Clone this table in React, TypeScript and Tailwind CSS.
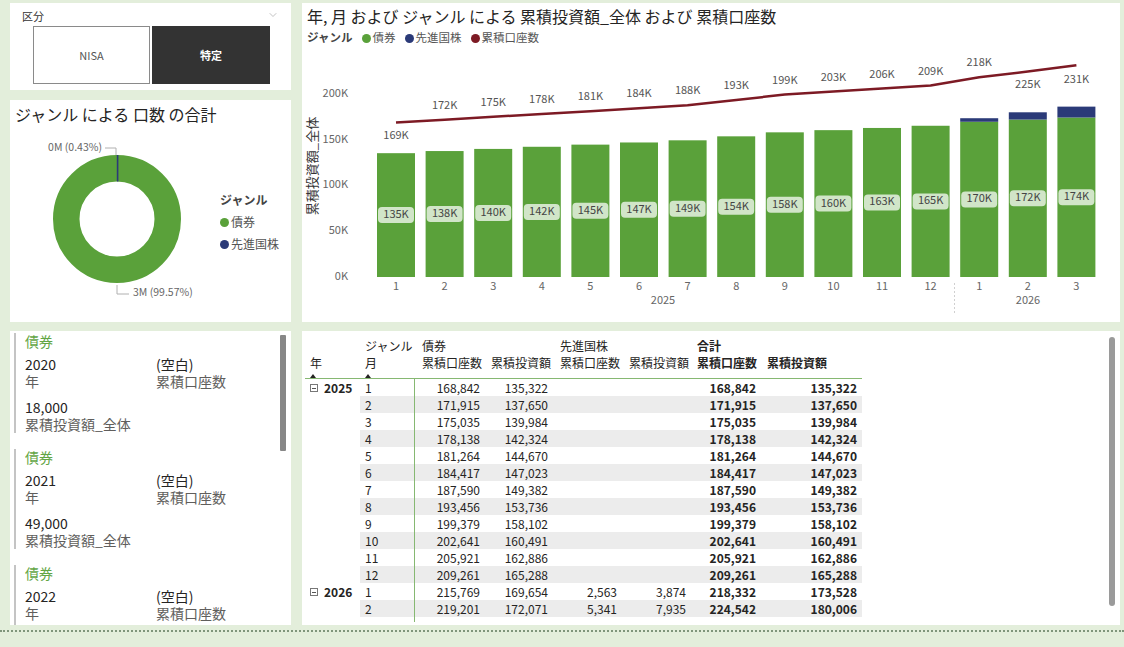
import { ChevronDown } from "lucide-react"

const green = [135.322, 137.65, 139.984, 142.324, 144.67, 147.023, 149.382, 153.736, 158.102, 160.491, 162.886, 165.288, 169.654, 172.071, 174.3]
const navy = [0, 0, 0, 0, 0, 0, 0, 0, 0, 0, 0, 0, 3.874, 7.935, 11.9]
const accounts = [168.842, 171.915, 175.035, 178.138, 181.264, 184.417, 187.59, 193.456, 199.379, 202.641, 205.921, 209.261, 218.332, 224.542, 231.4]
const months = [1, 2, 3, 4, 5, 6, 7, 8, 9, 10, 11, 12, 1, 2, 3]

const rows = [
  { y: "2025", m: "1", a: "168,842", b: "135,322", c: "", d: "", e: "168,842", f: "135,322" },
  { y: "", m: "2", a: "171,915", b: "137,650", c: "", d: "", e: "171,915", f: "137,650" },
  { y: "", m: "3", a: "175,035", b: "139,984", c: "", d: "", e: "175,035", f: "139,984" },
  { y: "", m: "4", a: "178,138", b: "142,324", c: "", d: "", e: "178,138", f: "142,324" },
  { y: "", m: "5", a: "181,264", b: "144,670", c: "", d: "", e: "181,264", f: "144,670" },
  { y: "", m: "6", a: "184,417", b: "147,023", c: "", d: "", e: "184,417", f: "147,023" },
  { y: "", m: "7", a: "187,590", b: "149,382", c: "", d: "", e: "187,590", f: "149,382" },
  { y: "", m: "8", a: "193,456", b: "153,736", c: "", d: "", e: "193,456", f: "153,736" },
  { y: "", m: "9", a: "199,379", b: "158,102", c: "", d: "", e: "199,379", f: "158,102" },
  { y: "", m: "10", a: "202,641", b: "160,491", c: "", d: "", e: "202,641", f: "160,491" },
  { y: "", m: "11", a: "205,921", b: "162,886", c: "", d: "", e: "205,921", f: "162,886" },
  { y: "", m: "12", a: "209,261", b: "165,288", c: "", d: "", e: "209,261", f: "165,288" },
  { y: "2026", m: "1", a: "215,769", b: "169,654", c: "2,563", d: "3,874", e: "218,332", f: "173,528" },
  { y: "", m: "2", a: "219,201", b: "172,071", c: "5,341", d: "7,935", e: "224,542", f: "180,006" },
  { y: "", m: "3", a: "222,684", b: "174,321", c: "8,672", d: "11,842", e: "231,356", f: "186,163" },
]

const cards = [
  { year: "2020", amount: "18,000" },
  { year: "2021", amount: "49,000" },
  { year: "2022", amount: "81,000" },
]

const cols = "grid grid-cols-[55px_55px_69px_68px_69px_69px_70px_102px]"

function Slicer() {
  return (
    <div className="h-[87px] bg-white relative">
      <div className="pl-[12px] pt-[6px] text-[11px] leading-[14px] text-[#333]">区分</div>
      <ChevronDown className="absolute right-[12px] top-[6px] text-[#999]" size={12} strokeWidth={1.2} />
      <div className="flex gap-[2px] pl-[23px] mt-[3px]">
        <div className="w-[117px] h-[58px] border border-[#8a8a8a] flex items-center justify-center text-[11px] text-[#555]">NISA</div>
        <div className="w-[118px] h-[58px] bg-[#333333] flex items-center justify-center text-[11px] font-bold text-white">特定</div>
      </div>
    </div>
  )
}

function Donut() {
  const cx = 107
  const cy = 91
  return (
    <div className="h-[222px] bg-white">
      <div className="h-[28px] flex items-center pl-[5px] text-[16px] text-[#252423]">ジャンル による 口数 の合計</div>
      <div className="flex">
        <svg width="205" height="194">
          <circle cx={cx} cy={cy} r="50.75" fill="none" stroke="#5aa13a" strokeWidth="26.5" />
          <line x1={cx + 0.6} y1={cy - 37.5} x2={cx + 0.6} y2={cy - 64} stroke="#2b3a78" strokeWidth="1.6" />
          <polyline points="95,20 106,20 106,27" fill="none" stroke="#b0b0b0" strokeWidth="1" />
          <text x="92" y="20" textAnchor="end" dominantBaseline="middle" fontSize="10.5" fill="#666">0M (0.43%)</text>
          <polyline points="107,157 107,166 119,166" fill="none" stroke="#b0b0b0" strokeWidth="1" />
          <text x="123" y="165" dominantBaseline="middle" fontSize="10.5" fill="#666">3M (99.57%)</text>
        </svg>
        <div className="pt-[61px] pl-[5px] text-[12px] leading-[22px] text-[#555]">
          <div className="font-bold text-[#444]">ジャンル</div>
          <div className="flex items-center gap-[2px]">
            <span className="w-[9px] h-[9px] rounded-full bg-[#5aa13a]" />債券
          </div>
          <div className="flex items-center gap-[2px]">
            <span className="w-[9px] h-[9px] rounded-full bg-[#2b3a78]" />先進国株
          </div>
        </div>
      </div>
    </div>
  )
}

function ComboChart() {
  const base = 230
  const k = 0.915
  const x = (i: number) => 94 + i * 48.6
  const y = (v: number) => base - v * k
  const linePts = accounts.map((v, i) => `${x(i)},${y(v)}`).join(" ")
  const offs = (i: number) => (i === 0 ? 14 : i === 13 ? 13 : i === 14 ? 15 : -14)
  return (
    <div className="w-[818px] h-[319px] bg-white">
      <div className="h-[26px] flex items-center pl-[5px] text-[16px] text-[#252423]">
        年, 月 および ジャンル による 累積投資額_全体 および 累積口座数
      </div>
      <div className="h-[18px] flex items-center gap-[10px] pl-[5px] text-[11.5px] text-[#555]">
        <span className="font-bold text-[#444]">ジャンル</span>
        <span className="flex items-center gap-[1px]"><span className="w-[9px] h-[9px] rounded-full bg-[#5aa13a]" />債券</span>
        <span className="flex items-center gap-[1px]"><span className="w-[9px] h-[9px] rounded-full bg-[#2b3a78]" />先進国株</span>
        <span className="flex items-center gap-[1px]"><span className="w-[9px] h-[9px] rounded-full bg-[#7d1a24]" />累積口座数</span>
      </div>
      <svg width="818" height="275">
        {[0, 50, 100, 150, 200].map((v) => (
          <text key={v} x="46" y={y(v)} textAnchor="end" dominantBaseline="middle" fontSize="11" fill="#666">{v}K</text>
        ))}
        <text x="11" y="119" transform="rotate(-90 11 119)" textAnchor="middle" dominantBaseline="middle" fontSize="13" fill="#333">累積投資額_全体</text>
        {green.map((g, i) => (
          <g key={i}>
            <rect x={x(i) - 19} y={y(g)} width="38" height={g * k} fill="#5aa13a" />
            {navy[i] > 0 && <rect x={x(i) - 19} y={y(g + navy[i])} width="38" height={navy[i] * k} fill="#2b3a78" />}
            <rect x={x(i) - 18} y={y(g / 2) - 8} width="36" height="16" rx="4" fill="#ffffff" fillOpacity="0.72" />
            <text x={x(i)} y={y(g / 2)} textAnchor="middle" dominantBaseline="middle" fontSize="11" fill="#444">{Math.round(g)}K</text>
            <text x={x(i)} y="240" textAnchor="middle" dominantBaseline="middle" fontSize="11" fill="#666">{months[i]}</text>
          </g>
        ))}
        <polyline points={linePts} fill="none" stroke="#7d1a24" strokeWidth="2.5" strokeLinejoin="round" />
        {accounts.map((v, i) => (
          <text key={i} x={x(i)} y={y(v) + offs(i)} textAnchor="middle" dominantBaseline="middle" fontSize="11" fill="#555">{Math.round(v)}K</text>
        ))}
        <line x1="652.5" y1="236" x2="652.5" y2="266" stroke="#d0d0d0" strokeDasharray="2 2" />
        <text x="361" y="254" textAnchor="middle" dominantBaseline="middle" fontSize="11" fill="#666">2025</text>
        <text x="726" y="254" textAnchor="middle" dominantBaseline="middle" fontSize="11" fill="#666">2026</text>
      </svg>
    </div>
  )
}

function Cards() {
  return (
    <div className="w-[281px] h-[294px] bg-white relative overflow-hidden">
      <div className="pl-[4px] pt-[2px] text-[14px] leading-[17px]">
        {cards.map((c) => (
          <div key={c.year} className="border-l-2 border-[#c4c4c4] pl-[9px] mb-[16px]">
            <div className="text-[#62a543]">債券</div>
            <div className="mt-[6px] grid grid-cols-[131px_1fr]">
              <div>
                <div className="text-[#252423]">{c.year}</div>
                <div className="text-[#605e5c]">年</div>
              </div>
              <div>
                <div className="text-[#252423]">(空白)</div>
                <div className="text-[#605e5c]">累積口座数</div>
              </div>
            </div>
            <div className="mt-[9px]">
              <div className="text-[#252423]">{c.amount}</div>
              <div className="text-[#605e5c]">累積投資額_全体</div>
            </div>
          </div>
        ))}
      </div>
      <div className="absolute right-[5px] top-[4px] w-[6px] h-[116px] bg-[#878787] rounded-[1px]" />
    </div>
  )
}

function Arrow() {
  return <span className="inline-block w-0 h-0 border-l-[3.5px] border-r-[3.5px] border-b-[4px] border-l-transparent border-r-transparent border-b-[#252423]" />
}

function Matrix() {
  return (
    <div className="w-[818px] h-[294px] bg-white relative overflow-hidden">
      <div className="pl-[3px] pt-[6px] text-[12px] text-[#252423]">
        <div className={`${cols} h-[17px] items-center`}>
          <div />
          <div className="pl-[5px]">ジャンル</div>
          <div className="pl-[7px] col-span-2">債券</div>
          <div className="pl-[8px] col-span-2">先進国株</div>
          <div className="pl-[7px] col-span-2 font-bold">合計</div>
        </div>
        <div className={`${cols} h-[17px] items-center whitespace-nowrap`}>
          <div className="pl-[5px]">年</div>
          <div className="pl-[5px]">月</div>
          <div className="pl-[7px]">累積口座数</div>
          <div className="pl-[7px]">累積投資額</div>
          <div className="pl-[8px]">累積口座数</div>
          <div className="pl-[8px]">累積投資額</div>
          <div className="pl-[7px] font-bold">累積口座数</div>
          <div className="pl-[7px] font-bold">累積投資額</div>
        </div>
        <div className={`${cols} h-[8px] w-[557px] border-b-[1.5px] border-[#86b872]`}>
          <div className="pl-[5px] leading-[4px]"><Arrow /></div>
          <div className="pl-[5px] leading-[4px]"><Arrow /></div>
        </div>
        <div className="h-[243px] overflow-hidden">
          {rows.map((r, i) => {
            const bg = i % 2 === 1 ? "bg-[#ececec]" : "bg-white"
            return (
              <div key={i} className={`${cols} h-[17px] items-center tabular-nums`}>
                <div className="flex items-center gap-[6px] pl-[5px] font-bold">
                  {r.y && (
                    <>
                      <span className="w-[8px] h-[8px] border border-[#777] flex items-center justify-center">
                        <span className="w-[4px] h-[1px] bg-[#555]" />
                      </span>
                      {r.y}
                    </>
                  )}
                </div>
                <div className={`${bg} h-full flex items-center pl-[5px] border-r border-[#86b872]`}>{r.m}</div>
                <div className={`${bg} h-full flex items-center justify-end pr-[4px]`}>{r.a}</div>
                <div className={`${bg} h-full flex items-center justify-end pr-[4px]`}>{r.b}</div>
                <div className={`${bg} h-full flex items-center justify-end pr-[4px]`}>{r.c}</div>
                <div className={`${bg} h-full flex items-center justify-end pr-[4px]`}>{r.d}</div>
                <div className={`${bg} h-full flex items-center justify-end pr-[4px] font-bold`}>{r.e}</div>
                <div className={`${bg} h-full flex items-center justify-end pr-[5px] font-bold`}>{r.f}</div>
              </div>
            )
          })}
        </div>
      </div>
      <div className="absolute right-[5px] top-[6px] w-[6px] h-[269px] bg-[#9a9a9a] rounded-full" />
    </div>
  )
}

export default function App() {
  return (
    <div className="w-[1124px] h-[647px] bg-[#e3eedb] overflow-hidden font-['Noto_Sans_CJK_JP',sans-serif] text-[#252423]">
      <div className="flex gap-[11px] pl-[10px] pt-[3px]">
        <div className="w-[281px] flex flex-col gap-[10px]">
          <Slicer />
          <Donut />
        </div>
        <ComboChart />
      </div>
      <div className="flex gap-[11px] pl-[10px] mt-[9px]">
        <Cards />
        <Matrix />
      </div>
      <div className="mt-[5px] border-t-2 border-dotted border-[#7f957b]" />
    </div>
  )
}
